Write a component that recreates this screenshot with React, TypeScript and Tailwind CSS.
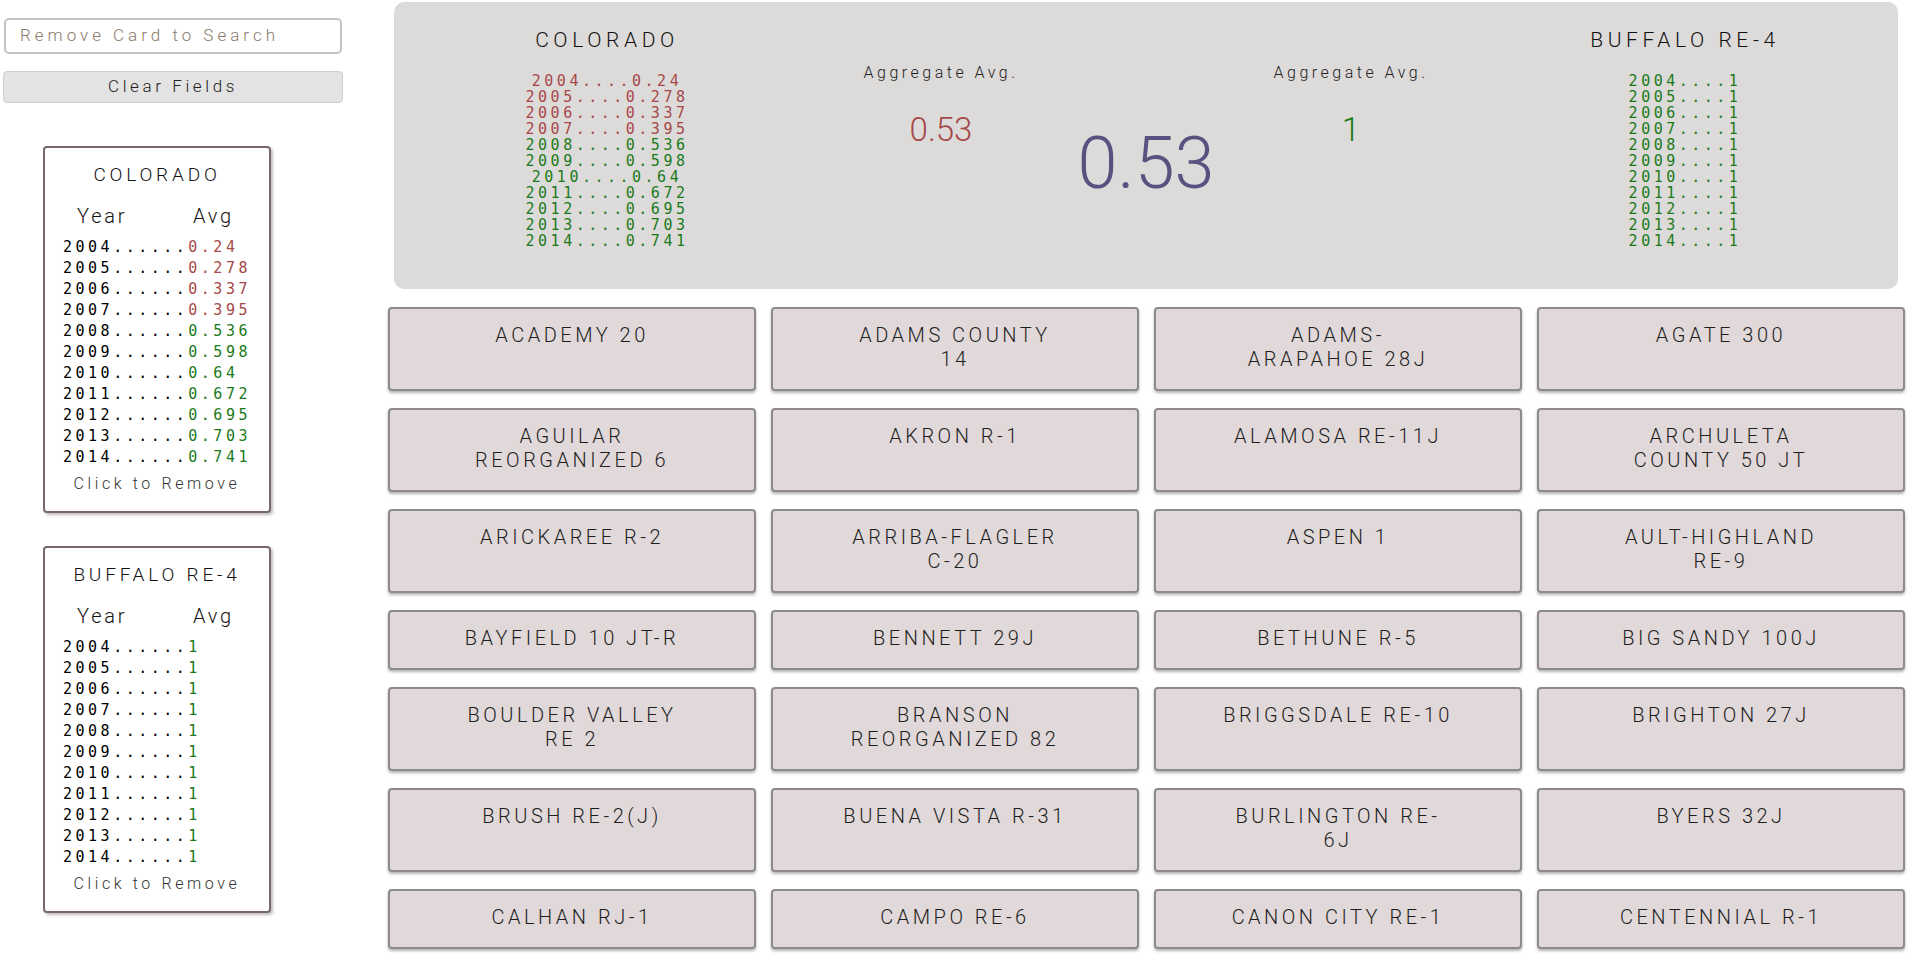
import React from "react";

type Row = { y: string; v: string; good: boolean };

const colorado: Row[] = [
  { y: "2004", v: "0.24", good: false },
  { y: "2005", v: "0.278", good: false },
  { y: "2006", v: "0.337", good: false },
  { y: "2007", v: "0.395", good: false },
  { y: "2008", v: "0.536", good: true },
  { y: "2009", v: "0.598", good: true },
  { y: "2010", v: "0.64", good: true },
  { y: "2011", v: "0.672", good: true },
  { y: "2012", v: "0.695", good: true },
  { y: "2013", v: "0.703", good: true },
  { y: "2014", v: "0.741", good: true },
];

const buffalo: Row[] = [
  "2004", "2005", "2006", "2007", "2008", "2009", "2010", "2011", "2012", "2013", "2014",
].map((y) => ({ y, v: "1", good: true }));

const districts: string[][] = [
  ["ACADEMY 20"],
  ["ADAMS COUNTY", "14"],
  ["ADAMS-", "ARAPAHOE 28J"],
  ["AGATE 300"],
  ["AGUILAR", "REORGANIZED 6"],
  ["AKRON R-1"],
  ["ALAMOSA RE-11J"],
  ["ARCHULETA", "COUNTY 50 JT"],
  ["ARICKAREE R-2"],
  ["ARRIBA-FLAGLER", "C-20"],
  ["ASPEN 1"],
  ["AULT-HIGHLAND", "RE-9"],
  ["BAYFIELD 10 JT-R"],
  ["BENNETT 29J"],
  ["BETHUNE R-5"],
  ["BIG SANDY 100J"],
  ["BOULDER VALLEY", "RE 2"],
  ["BRANSON", "REORGANIZED 82"],
  ["BRIGGSDALE RE-10"],
  ["BRIGHTON 27J"],
  ["BRUSH RE-2(J)"],
  ["BUENA VISTA R-31"],
  ["BURLINGTON RE-", "6J"],
  ["BYERS 32J"],
  ["CALHAN RJ-1"],
  ["CAMPO RE-6"],
  ["CANON CITY RE-1"],
  ["CENTENNIAL R-1"],
];

function SideCard({ title, rows }: { title: string; rows: Row[] }) {
  return (
    <div className="ml-[43px] w-[228px] border-2 border-[#7a6868] rounded-[4px] bg-white shadow-[2px_2px_3px_rgba(0,0,0,0.25)] pt-[15px] pb-[17px]">
      <div className="text-center text-[19px] leading-[24px] tracking-[3.8px] text-[#111] font-light">
        {title}
      </div>
      <div className="mt-[16px] flex justify-between pl-[32px] pr-[35px] text-[20px] leading-[26px] tracking-[2.8px] text-[#111] font-light">
        <span>Year</span>
        <span>Avg</span>
      </div>
      <div className="mt-[8px] pl-[18px] [font-family:'DejaVu_Sans_Mono',monospace] text-[15px] leading-[21px] tracking-[3.5px] text-black">
        {rows.map((r) => (
          <div key={r.y} className="whitespace-nowrap">
            {r.y}......
            <span className={r.good ? "text-[#1a7a1a]" : "text-[#a64848]"}>{r.v}</span>
          </div>
        ))}
      </div>
      <div className="mt-[6px] text-center text-[16px] leading-[20px] tracking-[3.6px] text-[#333] font-light">
        Click to Remove
      </div>
    </div>
  );
}

function PanelList({ title, rows }: { title: string; rows: Row[] }) {
  return (
    <div className="flex flex-col items-center pt-[24px]">
      <div className="text-[21px] leading-[28px] tracking-[4.6px] text-[#111] font-light whitespace-nowrap">
        {title}
      </div>
      <div className="mt-[19px] [font-family:'DejaVu_Sans_Mono',monospace] text-[15px] leading-[16px] tracking-[3.5px] text-center">
        {rows.map((r) => (
          <div key={r.y} className={r.good ? "text-[#1a7a1a]" : "text-[#a64848]"}>
            {r.y}....{r.v}
          </div>
        ))}
      </div>
    </div>
  );
}

function Aggregate({ value, good }: { value: string; good: boolean }) {
  return (
    <div className="flex flex-col items-center pt-[61px]">
      <div className="text-[16px] leading-[20px] tracking-[3.5px] text-[#222] font-light whitespace-nowrap">
        Aggregate Avg.
      </div>
      <div
        className={
          "mt-[27px] text-[33px] leading-[40px] font-light " +
          (good ? "text-[#1a7a1a]" : "text-[#a64848]")
        }
      >
        {value}
      </div>
    </div>
  );
}

export default function App() {
  return (
    <div className="flex h-screen w-full overflow-hidden bg-white [font-family:Roboto,'Noto_Sans',sans-serif]">
      <aside className="w-[388px] shrink-0">
        <div className="ml-[4px] mt-[18px] w-[338px] h-[36px] border-2 border-[#c4c4c4] rounded-[5px] flex items-center pl-[14px] text-[17px] tracking-[4px] text-[#8a7a6a] font-light">
          Remove Card to Search
        </div>
        <div className="ml-[3px] mt-[17px] w-[340px] h-[32px] border border-[#cfcfcf] rounded-[4px] bg-[#e3e3e3] flex items-center justify-center text-[17px] tracking-[3.6px] text-[#222] font-light">
          Clear Fields
        </div>
        <div className="mt-[43px]">
          <SideCard title="COLORADO" rows={colorado} />
        </div>
        <div className="mt-[33px]">
          <SideCard title="BUFFALO RE-4" rows={buffalo} />
        </div>
      </aside>
      <main className="flex-1 min-w-0">
        <div className="ml-[6px] mt-[2px] w-[1504px] h-[287px] bg-[#dddbda] rounded-[10px] grid grid-cols-[426px_242px_1fr_242px_426px]">
          <PanelList title="COLORADO" rows={colorado} />
          <Aggregate value="0.53" good={false} />
          <div className="flex justify-center pt-[118px]">
            <div className="text-[72px] leading-[88px] font-light text-[#585280]">0.53</div>
          </div>
          <Aggregate value="1" good={true} />
          <PanelList title="BUFFALO RE-4" rows={buffalo} />
        </div>
        <div className="mt-[18px] grid grid-cols-[repeat(4,368px)] gap-x-[15px] gap-y-[17px]">
          {districts.map((lines, i) => (
            <div
              key={i}
              className="border-2 border-[#8c8a8a] rounded-[4px] bg-[#e0d8d9] shadow-[0_2px_3px_rgba(0,0,0,0.3)] pt-[14px] pb-[18px] text-center text-[20px] leading-[24px] tracking-[3.5px] text-[#1e1e1e] font-light"
            >
              {lines.map((l, j) => (
                <div key={j} className="whitespace-nowrap">
                  {l}
                </div>
              ))}
            </div>
          ))}
          {[0, 1, 2, 3].map((k) => (
            <div
              key={"e" + k}
              className="h-[60px] border-2 border-[#8c8a8a] rounded-[4px] bg-[#e0d8d9] shadow-[0_2px_3px_rgba(0,0,0,0.3)]"
            />
          ))}
        </div>
      </main>
    </div>
  );
}
